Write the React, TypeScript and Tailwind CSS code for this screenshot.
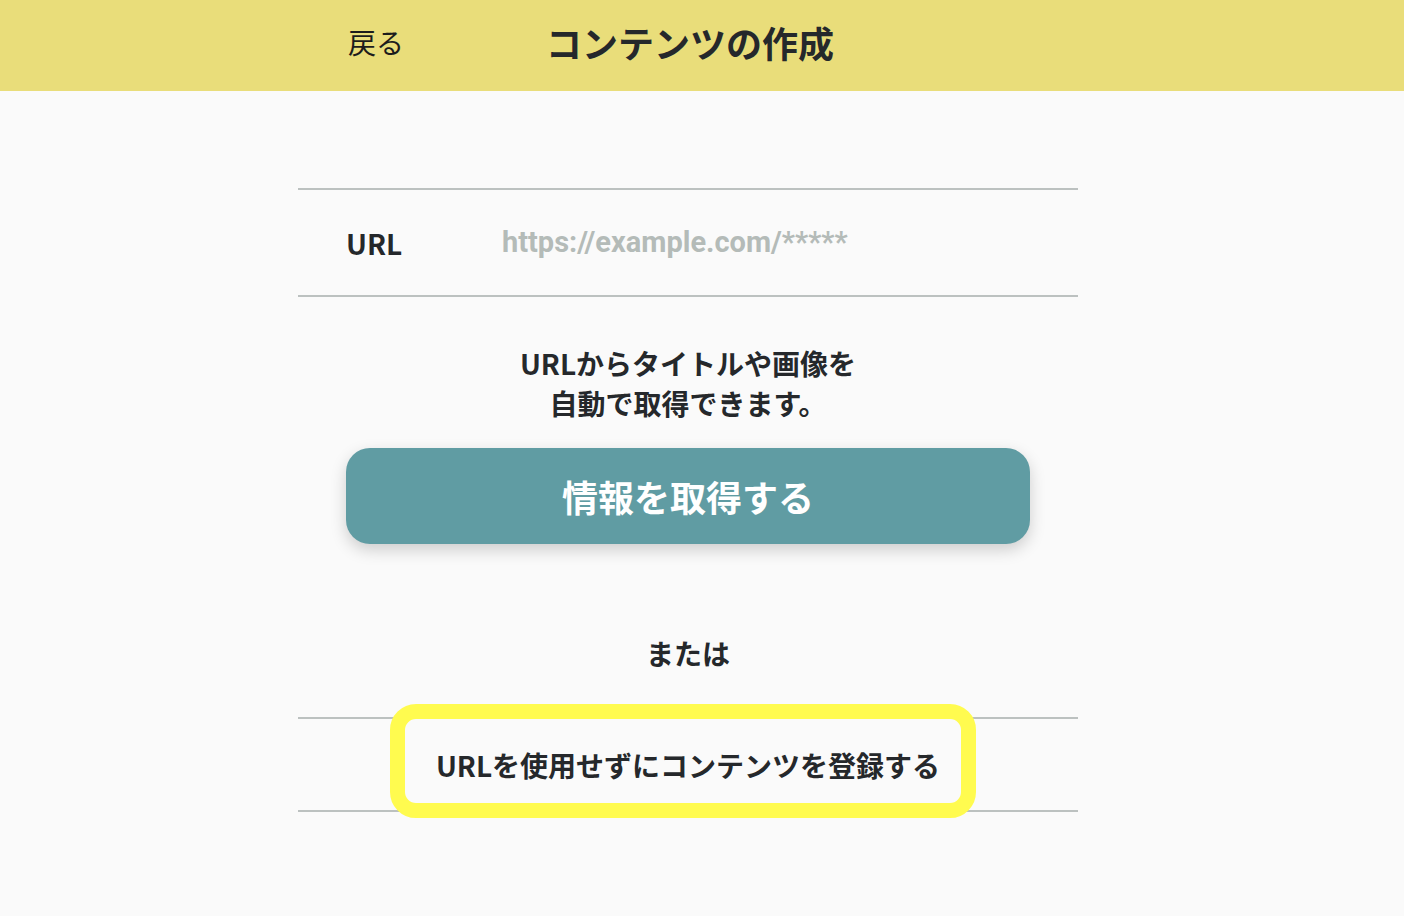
import { useState } from "react";

const jp = "font-['Noto_Sans_CJK_JP',sans-serif]";

export default function App() {
  const [url, setUrl] = useState("");

  return (
    <div className={`min-h-screen bg-[#fafafa] text-[#25282b] ${jp}`}>
      {/* Header */}
      <header className="h-[91px] bg-[#e9dd7a]">
        <div className="mx-auto flex h-full w-[780px] -translate-x-[14px] items-center px-[50px] pb-[8px]">
          <button className="w-[198px] text-left text-[28px] leading-none text-[#1c1c1c]">戻る</button>
          <h1 className="text-[36px] font-bold leading-none">コンテンツの作成</h1>
        </div>
      </header>

      <main className="mx-auto w-[780px] -translate-x-[14px]">
        {/* URL input row */}
        <div className="mt-[97px] flex h-[109px] items-center border-y-2 border-[#bcc1c0] px-[48px]">
          <label className="w-[156px] text-[28px] font-bold">URL</label>
          <input
            value={url}
            onChange={(e) => setUrl(e.target.value)}
            placeholder="https://example.com/*****"
            className="flex-1 bg-transparent font-['Roboto',sans-serif] text-[29px] font-bold outline-none placeholder:text-[#b4bbb8]"
          />
        </div>

        <p className="mt-[46px] text-center text-[28px] font-bold leading-[40px]">
          URLからタイトルや画像を
          <br />
          自動で取得できます。
        </p>

        <div className="mt-[25px] px-[48px]">
          <button className="flex h-[96px] w-full items-center justify-center rounded-[24px] bg-[#609ca3] text-[36px] font-bold text-white shadow-[0_6px_16px_rgba(0,0,0,0.18)]">
            情報を取得する
          </button>
        </div>

        <p className="mt-[89px] text-center text-[28px] font-bold leading-[40px]">または</p>

        {/* Register without URL */}
        <div className="relative mt-[44px] flex h-[95px] items-center justify-center border-y-2 border-[#bcc1c0]">
          <div className="pointer-events-none absolute left-[92px] top-[-15px] h-[114px] w-[586px] rounded-[26px] border-[15px] border-[#fffb4f]" />
          <button className="relative text-[28px] font-bold">URLを使用せずにコンテンツを登録する</button>
        </div>
      </main>
    </div>
  );
}
